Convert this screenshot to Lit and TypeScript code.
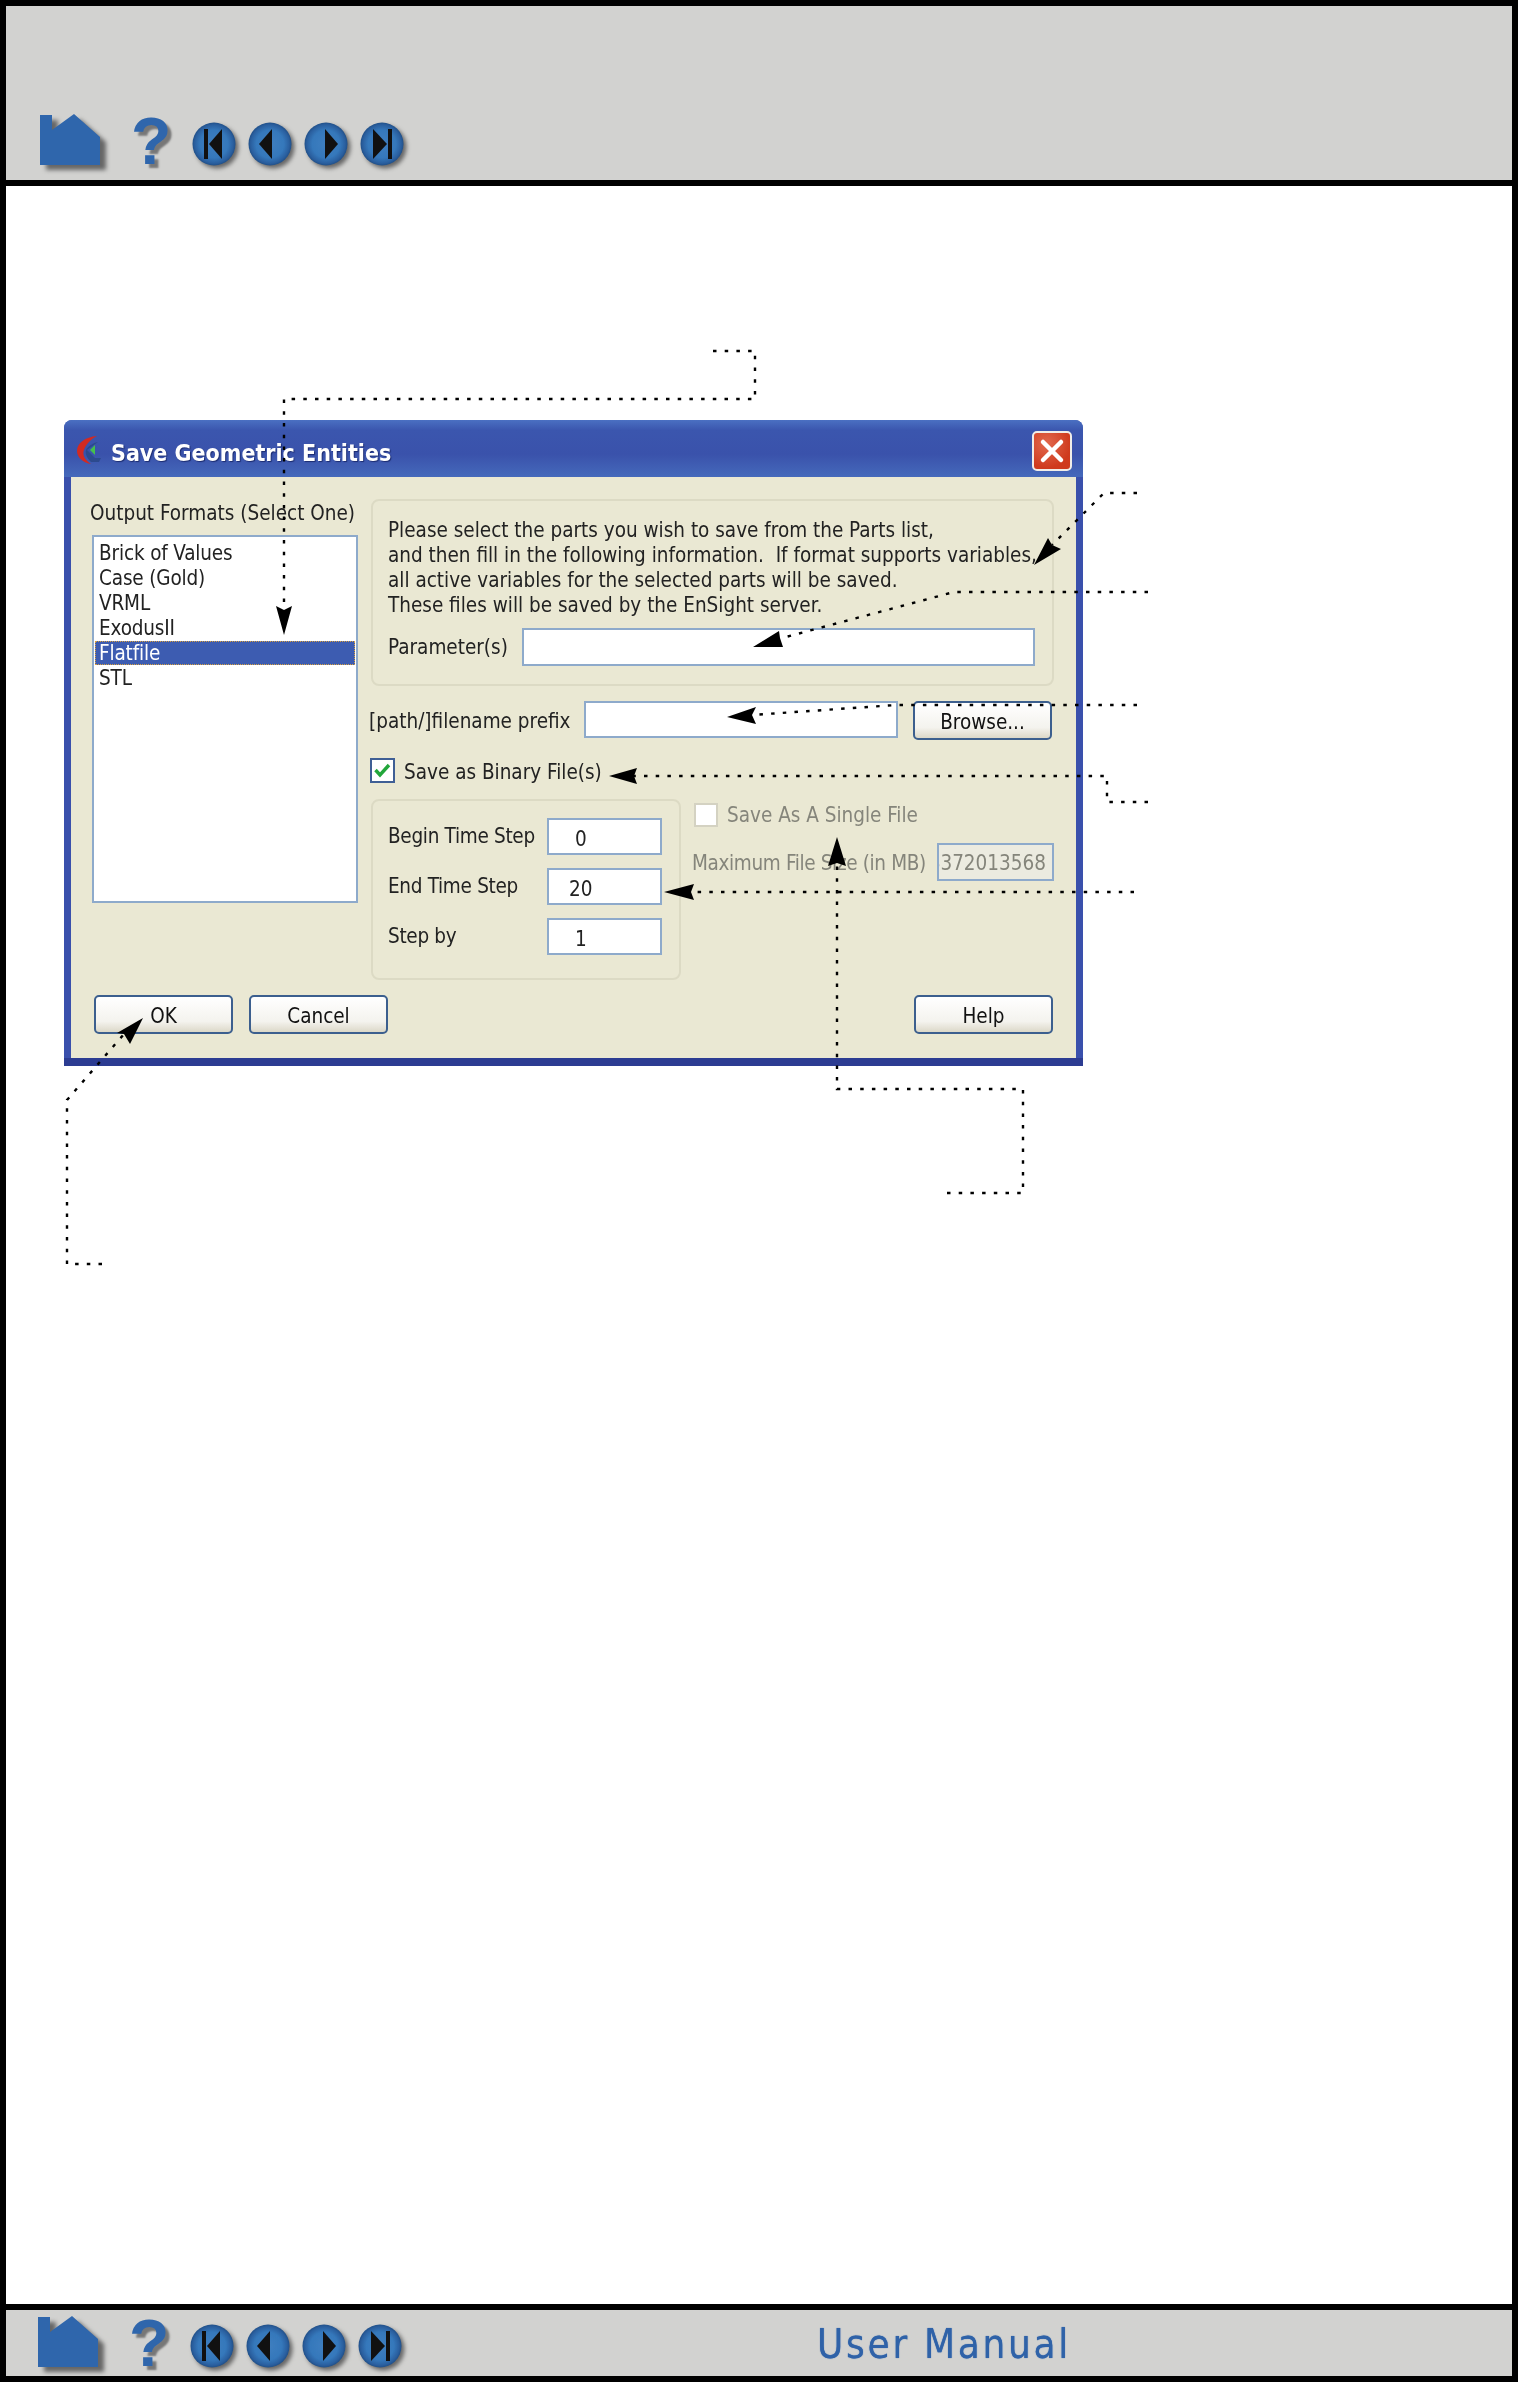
import { LitElement, html, css, svg } from "lit";
import { customElement } from "lit/decorators.js";

const navBtn = (glyph: unknown) => html`<svg class="orb" width="44" height="44" viewBox="0 0 44 44">
  <defs><radialGradient id="orbg" cx="50%" cy="50%" r="52%">
    <stop offset="0%" stop-color="#3f7fc0"/><stop offset="62%" stop-color="#3578bb"/>
    <stop offset="86%" stop-color="#2a5f9f"/><stop offset="100%" stop-color="#1d4a80"/>
  </radialGradient></defs>
  <circle cx="22" cy="22" r="21.5" fill="url(#orbg)"/>
  ${glyph}
</svg>`;

const nav = (cls: string) => html`<div class="nav ${cls}">
  <svg class="home" width="60" height="52" viewBox="0 0 60 52"><polygon points="0,1 12,1 12,16 34,0 60,23 60,51 0,51" fill="#2f66ac"/></svg>
  <span class="help-mark">?</span>
  <div class="orbs">
    ${navBtn(svg`<rect x="12" y="7" width="4" height="30" fill="#111"/><polygon points="17,22 30,7 30,37" fill="#111"/>`)}
    ${navBtn(svg`<polygon points="11,22 24,7 24,37" fill="#111"/>`)}
    ${navBtn(svg`<polygon points="21,7 21,37 34,22" fill="#111"/>`)}
    ${navBtn(svg`<polygon points="13,7 13,37 27,22" fill="#111"/><rect x="28" y="7" width="4" height="30" fill="#111"/>`)}
  </div>
</div>`;

const dots = (pts: string) => svg`<polyline points=${pts} fill="none" stroke="#000" stroke-width="2.4" stroke-dasharray="3.5 8.2"/>`;
const head = (pts: string) => svg`<polygon points=${pts} fill="#000"/>`;

@customElement("app-root")
export class AppRoot extends LitElement {
  static styles = css`
    :host { display: block; width: 1518px; height: 2382px; position: relative; background: #fff; font-family: "DejaVu Sans", "Liberation Sans", sans-serif; }
    .page { box-sizing: border-box; width: 1518px; height: 2382px; border: 6px solid #000; display: flex; flex-direction: column; }
    .bar { background: #d2d2d0; display: flex; align-items: flex-end; flex: none; }
    .top { height: 174px; border-bottom: 6px solid #000; box-sizing: content-box; }
    .bottom { height: 66px; border-top: 6px solid #000; justify-content: space-between; }
    .main { flex: 1; padding: 234px 0 0 58px; }

    .nav { display: flex; align-items: flex-end; filter: blur(0.5px); }
    .nav.t { padding: 0 0 14px 34px; }
    .nav.b { padding: 0 0 8px 32px; }
    .home { filter: drop-shadow(6px 5px 2px #666); flex: none; }
    .help-mark { width: 40px; margin-left: 31px; height: 50px; font: bold 66px/50px "Liberation Sans", sans-serif; color: #2f66ac; text-shadow: 4px 4px 2px #777; }
    .orbs { display: flex; gap: 12px; margin-left: 21px; }
    .orb { display: block; filter: drop-shadow(3px 3px 2px #666); }
    .brand { font: 40px/40px "DejaVu Sans", sans-serif; font-stretch: condensed; color: #2f62a8; margin: 0 441px 12px 0; letter-spacing: 2.7px; text-shadow: 0 0 1px #2f62a8; filter: blur(0.4px); }

    .dialog { width: 1019px; height: 646px; box-sizing: border-box; border-radius: 8px 8px 0 0; padding: 0 7px 8px; display: flex; flex-direction: column; background-image: linear-gradient(to bottom, #3a50ac 0, #3a50ac 638px, #2c3c92 638px); }
    .title { box-sizing: border-box; height: 57px; flex: none; margin: 0 -7px; padding: 5px 11px 0 13px; border-radius: 8px 8px 0 0; display: flex; align-items: center; background: linear-gradient(to bottom, #4a70c2 0, #3b56ae 18%, #3a52ab 60%, #4569bb 100%); color: #fff; font-weight: bold; font-size: 23px; font-stretch: condensed; text-shadow: 1px 1px 1px #1c2c70; }
    .title-text { flex: 1; padding-top: 4px; filter: blur(0.35px); }
    .logo { margin-right: 10px; flex: none; margin-top: -2px; }
    .close { width: 40px; height: 40px; flex: none; box-sizing: border-box; border: 2px solid #f0ede8; border-radius: 5px; background: radial-gradient(circle at 35% 30%, #e2694d, #cf3a1e 70%); display: flex; align-items: center; justify-content: center; }

    .body { flex: 1; background: #eae8d3; padding: 22px 23px 0 21px; display: flex; flex-direction: column; font-size: 20.5px; font-stretch: condensed; color: #222; }
    .cols { display: flex; gap: 13px; height: 481px; }
    .left { width: 266px; flex: none; }
    .left-label { margin: 2px 0 10px -2px; line-height: 24px; white-space: nowrap; }
    .list { box-sizing: border-box; height: 368px; border: 2px solid #8eaacb; background: #fff; padding: 4px 1px; }
    .item { height: 25px; line-height: 24px; padding-left: 4px; letter-spacing: -0.15px; }
    .item.sel { background: #3d5cb1; color: #fff; outline: 1px dotted #d8a040; outline-offset: -1px; height: 24px; margin: 0 0 1px; }
    .right { width: 683px; flex: none; display: flex; flex-direction: column; }
    .group { box-sizing: border-box; border: 2px solid #dcdac4; border-radius: 8px; flex: none; }
    .g1 { height: 187px; padding: 17px 17px 0 15px; }
    .msg { line-height: 25px; white-space: pre; height: 100px; margin-bottom: 10px; }
    .row { display: flex; align-items: center; }
    .field { box-sizing: border-box; border: 2px solid #8eaacb; background: #fff; height: 38px; }
    .param { width: 513px; margin-left: auto; }
    .row2 { margin: 15px 0 0 -2px; align-items: flex-start; height: 39px; }
    .row2 .lab { width: 215px; line-height: 41px; }
    .prefix { width: 314px; height: 37px; }
    .btn { box-sizing: border-box; width: 139px; height: 39px; padding-top: 2px; border: 2px solid #3c5f8e; border-radius: 5px; background: linear-gradient(to bottom, #fff 0, #f4f3ee 70%, #dcd8c8 100%); display: flex; align-items: center; justify-content: center; color: #111; }
    .browse { margin-left: 15px; }
    .bin { margin: 18px 0 16px -1px; height: 25px; }
    .bin span { padding-top: 2px; }
    .box { box-sizing: border-box; width: 25px; height: 25px; border: 2px solid #3f5f95; background: #fff; display: flex; align-items: center; justify-content: center; margin-right: 9px; flex: none; }
    .lower { display: flex; }
    .g2 { width: 310px; height: 181px; padding: 17px 17px 0 15px; display: flex; flex-direction: column; gap: 13px; }
    .step { display: flex; align-items: center; justify-content: space-between; height: 37px; }
    .step .lab { margin-top: -1px; letter-spacing: -0.3px; }
    .num { box-sizing: border-box; width: 115px; height: 37px; border: 2px solid #8eaacb; background: #fff; padding: 3px 0 0 26px; line-height: 32px; }
    .num.wide { padding-left: 20px; }
    .single { margin-left: 11px; flex: 1; color: #85857b; }
    .s1 { margin: 4px 0 0 2px; height: 24px; }
    .s1 .box { width: 24px; height: 24px; border-color: #d4d2c2; margin-right: 9px; }
    .s2 { margin-top: 16px; justify-content: space-between; height: 38px; }
    .s2 span { letter-spacing: -0.35px; padding-top: 2px; }
    .maxv { box-sizing: border-box; width: 117px; height: 38px; border: 2px solid #8eaacb; background: #ecebe0; overflow: hidden; display: flex; justify-content: flex-end; align-items: center; padding: 2px 6px 0 0; white-space: nowrap; }
    .foot { margin: 15px 0 0 2px; display: flex; gap: 16px; }
    .foot .help { margin-left: auto; }
    .overlay { position: absolute; left: 0; top: 0; pointer-events: none; }
    .soft { filter: blur(0.35px); }
  `;

  render() {
    return html`<div class="page">
      <header class="bar top">${nav("t")}</header>
      <main class="main">
        <section class="dialog">
          <div class="title">
            <svg class="logo" width="24" height="28" viewBox="0 0 24 28">
              <path d="M20 0 C8 1 0 7 0 15 C0 22 7 27 14 28 C8 24 5 19 7 14 C9 8 14 3 20 0Z" fill="#d22a22"/>
              <path d="M21 6 L10 14 L18 22 L24 22 L22 26 L14 26 C10 22 8 18 9 14 C11 10 16 7 21 6Z" fill="#2c4a8e"/>
              <polygon points="13,14 18,9 18,19" fill="#44c04c"/>
            </svg>
            <span class="title-text">Save Geometric Entities</span>
            <div class="close"><svg width="26" height="26" viewBox="0 0 26 26"><path d="M4 4 L22 22 M22 4 L4 22" stroke="#fff" stroke-width="4.5" stroke-linecap="round"/></svg></div>
          </div>
          <div class="body soft">
            <div class="cols">
              <div class="left">
                <div class="left-label">Output Formats (Select One)</div>
                <div class="list">
                  <div class="item">Brick of Values</div>
                  <div class="item">Case (Gold)</div>
                  <div class="item">VRML</div>
                  <div class="item">ExodusII</div>
                  <div class="item sel">Flatfile</div>
                  <div class="item">STL</div>
                </div>
              </div>
              <div class="right">
                <div class="group g1">
                  <div class="msg">Please select the parts you wish to save from the Parts list,
and then fill in the following information.  If format supports variables,
all active variables for the selected parts will be saved.
These files will be saved by the EnSight server.</div>
                  <div class="row"><span>Parameter(s)</span><div class="field param"></div></div>
                </div>
                <div class="row row2"><span class="lab">[path/]filename prefix</span><div class="field prefix"></div><div class="btn browse">Browse...</div></div>
                <div class="row bin"><div class="box"><svg width="17" height="15" viewBox="0 0 17 15"><path d="M1.5 7 L6 12 L15 2" fill="none" stroke="#22a63a" stroke-width="3.4"/></svg></div><span>Save as Binary File(s)</span></div>
                <div class="lower">
                  <div class="group g2">
                    <div class="step"><span class="lab">Begin Time Step</span><div class="num">0</div></div>
                    <div class="step"><span class="lab">End Time Step</span><div class="num wide">20</div></div>
                    <div class="step"><span class="lab">Step by</span><div class="num">1</div></div>
                  </div>
                  <div class="single">
                    <div class="row s1"><div class="box"></div><span>Save As A Single File</span></div>
                    <div class="row s2"><span>Maximum File Size (in MB)</span><div class="maxv">8372013568</div></div>
                  </div>
                </div>
              </div>
            </div>
            <div class="foot">
              <div class="btn">OK</div>
              <div class="btn">Cancel</div>
              <div class="btn help">Help</div>
            </div>
          </div>
        </section>
      </main>
      <footer class="bar bottom">${nav("b")}<span class="brand">User Manual</span></footer>
    </div>
    <svg class="overlay" width="1518" height="2382" viewBox="0 0 1518 2382">
      ${dots("713,351 755,351 755,399 284,399 284,612")}
      ${head("276,606 284,610 292,606 284,635")}
      ${dots("1137,493 1104,493 1052,545")}
      ${head("1034,565 1048,538 1052,545 1061,549")}
      ${dots("1148,592 954,592 782,638")}
      ${head("753,647 779,631 780,638 783,647")}
      ${dots("1137,705 896,705 752,715")}
      ${head("727,717 756,707 752,715 756,724")}
      ${dots("1148,802 1107,802 1107,776 634,776")}
      ${head("609,776 637,768 634,776 637,784")}
      ${dots("1134,892 691,892")}
      ${head("664,892 694,884 691,892 694,900")}
      ${dots("947,1193 1023,1193 1023,1089 837,1089 837,864")}
      ${head("837,837 846,866 837,863 828,866")}
      ${dots("102,1264 67,1264 67,1100 124,1034")}
      ${head("143,1018 130,1044 124,1034 117,1033")}
    </svg>`;
  }
}
